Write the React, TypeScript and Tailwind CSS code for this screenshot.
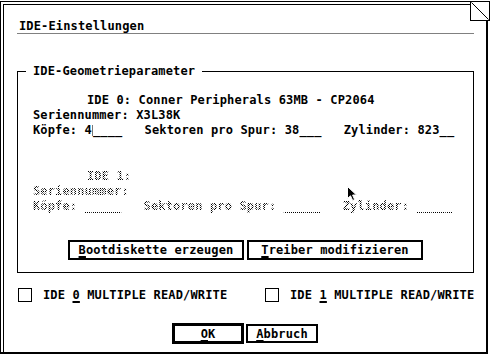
import React from "react";

const dither =
  "bg-clip-text text-transparent bg-[image:conic-gradient(#000_25%,#fff_0_50%,#000_0_75%,#fff_0)] bg-[length:2px_2px]";

function U({ children }: { children: React.ReactNode }) {
  return <span className="underline decoration-2 underline-offset-[2px]">{children}</span>;
}

export default function App() {
  return (
    <div className="relative w-[490px] h-[357px] overflow-hidden bg-white text-black font-['DejaVu_Sans_Mono',monospace] font-bold text-[12px] tracking-[0.15px]">
      <div className="mt-px w-[488px] h-[353px] border-l border-t border-r-2 border-b-2 border-black">
        <div className="ml-[2px] mt-[2px] h-[349px] border-l border-t border-black">
          <div className="ml-[13px] mt-[14px] w-[457px] h-[15px] border-b border-[#808080] pl-[2px] leading-[14px]">
            IDE-Einstellungen
          </div>

          <fieldset className="ml-[13px] mt-[30px] w-[457px] border border-black pb-[12px]">
            <legend className="ml-[8px] px-[7px] leading-[14px]">IDE-Geometrieparameter</legend>
            <div className="pt-[15px]">
              <div className="pl-[15px] leading-[15px] whitespace-pre">
                <div className="pl-[54px]">IDE 0: Conner Peripherals 63MB - CP2064</div>
                <div>Seriennummer: X3L38K</div>
                <div>
                  Köpfe: 4
                  <span className="inline-block w-px h-[11px] bg-[#777] align-[-2px]" />
                  ____   Sektoren pro Spur: 38___   Zylinder: 823__
                </div>
                <div className="mt-[31px] pl-[54px]">
                  <span className={dither}>IDE 1:</span>
                </div>
                <div>
                  <span className={dither}>Seriennummer:</span>
                </div>
                <div>
                  <span className={dither}>Köpfe: _____   Sektoren pro Spur: _____   Zylinder: _____</span>
                </div>
              </div>
              <div className="mt-[26px] flex justify-center gap-[3px]">
                <div className="w-[176px] h-[20px] border-2 border-black flex items-center justify-center leading-[14px]">
                  <span className="whitespace-pre">
                    <U>B</U>ootdiskette erzeugen
                  </span>
                </div>
                <div className="w-[176px] h-[20px] border-2 border-black flex items-center justify-center leading-[14px]">
                  <span className="whitespace-pre">
                    <U>T</U>reiber modifizieren
                  </span>
                </div>
              </div>
            </div>
          </fieldset>

          <div className="mt-[15px] h-[14px] pl-[14px] flex items-center leading-[14px]">
            <div className="w-[247px] flex items-center gap-[11px]">
              <div className="w-[14px] h-[14px] border border-black" />
              <span className="whitespace-pre">
                IDE <U>0</U> MULTIPLE READ/WRITE
              </span>
            </div>
            <div className="flex items-center gap-[11px]">
              <div className="w-[14px] h-[14px] border border-black" />
              <span className="whitespace-pre">
                IDE <U>1</U> MULTIPLE READ/WRITE
              </span>
            </div>
          </div>

          <div className="mt-[21px] h-[21px] pl-[168px] flex items-center gap-[2px] leading-[14px]">
            <div className="w-[72px] h-[21px] border-[3px] border-black flex items-center justify-center">
              <span>
                <U>O</U>K
              </span>
            </div>
            <div className="w-[72px] h-[19px] border-2 border-black flex items-center justify-center">
              <span>
                <U>A</U>bbruch
              </span>
            </div>
          </div>
        </div>
      </div>

      <svg className="absolute left-[470px] top-[1px]" width="20" height="20" viewBox="0 0 20 20">
        <rect x="0.5" y="0.5" width="19" height="19" fill="white" stroke="black" />
        <line x1="1.5" y1="1.5" x2="18.5" y2="18.5" stroke="black" />
      </svg>

      <svg className="absolute left-[347px] top-[186px]" width="12" height="17" viewBox="0 0 12 17">
        <path
          d="M0.5 0.5 L0.5 12.5 L3.5 9.8 L5.7 14.5 L7.6 13.6 L5.6 9 L9.5 9 Z"
          fill="black"
          stroke="white"
          strokeWidth="1"
        />
      </svg>
    </div>
  );
}
